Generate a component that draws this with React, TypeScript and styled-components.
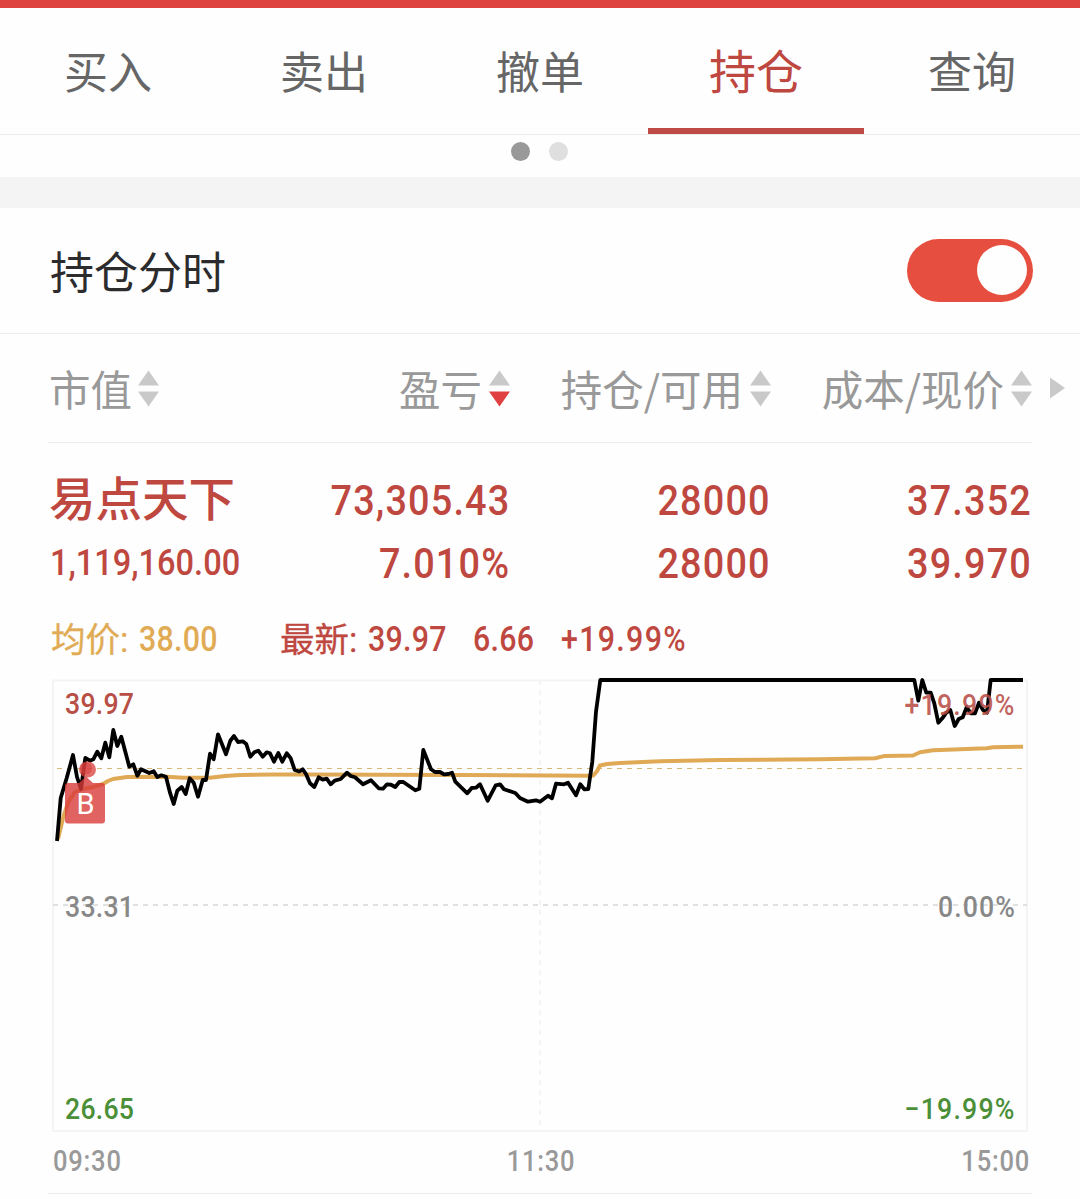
import React, { useState } from "react";
import styled, { createGlobalStyle } from "styled-components";

const red = "#be4840";
const line = "#ececec";

const GlobalStyle = createGlobalStyle`
  *, *::before, *::after { box-sizing: border-box; }
  html, body { margin: 0; background: #fefefe; }
  body { font-family: Roboto, "Noto Sans CJK SC", sans-serif; }
`;

const Page = styled.main`
  width: 1080px;
  height: 1199px;
  overflow: hidden;
  display: flex;
  flex-direction: column;
  background: #fefefe;
`;

const StatusStrip = styled.div`
  flex: none;
  height: 8px;
  background: #de4340;
`;

const Tabs = styled.nav`
  flex: none;
  height: 127px;
  display: grid;
  grid-template-columns: repeat(5, 1fr);
  border-bottom: 1px solid ${line};
`;

const Tab = styled.button<{ $active: boolean }>`
  border: 0;
  border-bottom: 6px solid ${(p) => (p.$active ? "#be4b45" : "transparent")};
  background: none;
  padding: 0;
  height: 126px;
  font-family: "Noto Sans CJK SC", sans-serif;
  font-size: ${(p) => (p.$active ? 47 : 44)}px;
  line-height: ${(p) => (p.$active ? 121 : 124)}px;
  font-weight: 400;
  color: ${(p) => (p.$active ? red : "#666")};
`;

const TabLabel = styled.span`
  display: block;
  height: 120px;
`;

const Pager = styled.div`
  flex: none;
  height: 42px;
  padding: 7px 2px 0 0;
  display: flex;
  justify-content: center;
  gap: 19px;
`;

const PagerDot = styled.span<{ $on: boolean }>`
  width: 19px;
  height: 19px;
  border-radius: 50%;
  background: ${(p) => (p.$on ? "#999" : "#dfdfdf")};
`;

const Band = styled.div`
  flex: none;
  height: 31px;
  background: #f4f4f4;
`;

const SwitchRow = styled.section`
  flex: none;
  height: 126px;
  padding: 0 47px 0 50px;
  display: flex;
  align-items: center;
  justify-content: space-between;
  border-bottom: 1px solid ${line};
`;

const SwitchLabel = styled.h2`
  margin: 0;
  padding-bottom: 2px;
  font: 400 44px/60px "Noto Sans CJK SC", sans-serif;
  color: #2c2c2e;
`;

const Switch = styled.button<{ $on: boolean }>`
  width: 126px;
  height: 63px;
  padding: 0 6px 1px;
  border: 0;
  border-radius: 32px;
  display: flex;
  align-items: center;
  justify-content: ${(p) => (p.$on ? "flex-end" : "flex-start")};
  background: ${(p) => (p.$on ? "#e64e3f" : "#ccc")};
`;

const Knob = styled.span`
  width: 50px;
  height: 50px;
  border-radius: 50%;
  background: #fefefe;
`;

const HeadRow = styled.div`
  flex: none;
  height: 109px;
  display: flex;
  align-items: center;
  padding-left: 48px;
`;

const columns = "201px 261px 261px 261px";

const HeadGrid = styled.div`
  width: 984px;
  height: 109px;
  display: grid;
  grid-template-columns: ${columns};
  align-items: center;
  border-bottom: 1px solid ${line};
`;

const HeadCell = styled.div<{ $left?: boolean }>`
  display: flex;
  align-items: center;
  justify-content: ${(p) => (p.$left ? "flex-start" : "flex-end")};
  gap: ${(p) => (p.$left ? 6 : 7)}px;
  padding-left: ${(p) => (p.$left ? 1 : 0)}px;
  font: 400 41.5px/60px "Noto Sans CJK SC", sans-serif;
  white-space: nowrap;
  color: #999;
`;

const MoreArrow = styled.svg`
  display: block;
  margin: 0 0 2px 18px;
`;

const SortIcon = styled.svg`
  display: block;
  flex: none;
`;

const Holding = styled.div`
  flex: none;
  height: 161px;
  padding: 26px 48px 0;
  display: grid;
  grid-template-columns: ${columns};
  grid-template-rows: 63px 63px;
  color: ${red};
`;

const StockName = styled.div`
  padding-left: 1px;
  font: 500 46.5px/53px "Noto Sans CJK SC", sans-serif;
`;

/* Condensed numerals: Roboto squeezed horizontally, with looser tracking. */
const Num = styled.span<{ $size: number; $track: number; $from?: "left" | "right" | "center" }>`
  display: inline-block;
  font-family: Roboto, sans-serif;
  font-weight: 500;
  font-size: ${(p) => p.$size}px;
  letter-spacing: ${(p) => p.$track}px;
  transform: scaleX(0.88);
  transform-origin: ${(p) => p.$from ?? "left"} center;
  white-space: nowrap;
`;

const Amount = styled.div`
  padding-left: 2px;
  line-height: 62px;
`;

const Figure = styled.div`
  text-align: right;
  line-height: 63px;
`;

const Quote = styled.div`
  flex: none;
  height: 72px;
  padding: 5px 0 0 51px;
  display: flex;
  line-height: 61px;
`;

const QuoteItem = styled.span<{ $width: number; $tone?: string }>`
  width: ${(p) => p.$width}px;
  display: flex;
  color: ${(p) => p.$tone ?? red};
`;

const QuoteLabel = styled.span`
  width: 87.5px;
  font-size: 34.5px;
  font-weight: 400;
  line-height: 62px;
  -webkit-text-stroke: 0.3px currentColor;
`;

const Chart = styled.svg`
  flex: none;
  display: block;
`;

const LabelText = styled.text<{ $tone: string }>`
  font: 500 29px Roboto, sans-serif;
  fill: ${(p) => p.$tone};
`;

const MarkerText = styled.text`
  font: 400 29px Roboto, sans-serif;
  fill: #fff;
`;

const TimeAxis = styled.div`
  flex: none;
  width: 984px;
  height: 54px;
  margin-left: 48px;
  padding: 0 2px 0 5px;
  display: grid;
  grid-template-columns: repeat(3, 1fr);
  line-height: 42px;
  color: #999;
  border-bottom: 1px solid ${line};
`;

const Tick = styled.div<{ $align: "left" | "center" | "right" }>`
  text-align: ${(p) => p.$align};
`;

const price =
  "57,841 60.7,798 66.7,778 73,755 77,777 81,789 85.3,758 90,760.7 93.3,759.3 97.3,751.7 101.3,758.3 105.3,742.7 109.3,757.3 113.3,730 117.3,746 121.3,736.7 129.3,766.7 133.3,764.3 137.3,775.7 141,769.3 149.3,773 153.7,771.3 157.3,777 161.3,775.3 166,776.7 170,792.7 173.7,804 177.3,790.7 181.7,787 185.7,794 189.7,778.3 193.7,782.7 198,796.7 202.7,780 206,780 210,753.7 213.7,759.3 218,734.3 226,754.3 230.3,740.7 234,736 238,742 242.7,741.3 246.3,744 250.3,756.7 254.3,752.3 258.3,750.7 262.7,756.7 266.7,752.3 270,753.3 274,761.7 278.3,753 282.3,761.7 286.7,753.3 290.7,758.3 294.7,770 299.3,771.5 302.7,769.3 306,774 310,783.3 314.3,787 318.7,777.3 322.7,779.7 326.7,778.7 330.7,784.3 334.7,780.7 340.7,779 347,772.7 350.7,776 355,777.3 363,784.3 371,780.3 378.7,788.3 383,788.7 387,784.3 391,784.7 395.3,787 399.3,782 403.3,782 415.3,790.3 419.3,788.7 423.3,750 431,769.3 435,772 440,772 444,774.3 448.3,774 452,772.7 455.3,781.7 467.3,793.3 471.7,788 476,787.7 480,784.3 487.7,800.7 495.7,785.3 500,784.3 504,789.3 515.3,793 520,798 528,801.7 536,800.3 540,801.7 548,795.7 552,798.3 556,783.7 564,784.3 568,782.7 576,795.3 580.3,784.3 584.3,789.3 588.3,789 592.3,761.7 596,711.7 600.3,680 914.3,680 918.3,700.7 922.3,680 926.3,692.7 930.7,692.7 934.3,703.3 938.3,722.7 942.3,718.3 946.3,712.7 950.3,710 954.7,726 958.7,719 962.7,717.3 966.7,707.3 970.7,713.3 975,713.3 979,702.7 983,710 987,712.7 990.7,680 1023,680";

const average =
  "58,839 63.3,817 68.3,802 75,792 83,789 93,787 103,784 108,781 113,779 127,777 167,776.7 183,777.7 210,777.7 225,776 240,775 273,774.5 300,774.5 460,775 590,775.7 593.3,775.4 596.7,771.7 600,765.5 607,764 620,763 660,761.3 720,760 820,759.3 875,758.3 885,755.9 913,755.5 920,752.3 933,750.3 987,748.3 993,747.3 1023,746.7";

function SortArrows({ down = false }: { down?: boolean }) {
  return (
    <SortIcon width="21" height="37" viewBox="0 0 21 37">
      <path d="M10.5 0.5 21 15.5H0z" fill="#c9c9c9" />
      <path d="M0 21.5h21L10.5 36.5z" fill={down ? "#e04040" : "#c9c9c9"} />
    </SortIcon>
  );
}

function ChartLabel(props: { x: number; y: number; width: number; tone: string; opacity?: number; children: string }) {
  return (
    <LabelText
      $tone={props.tone}
      fillOpacity={props.opacity ?? 1}
      transform={`translate(${props.x} ${props.y}) scale(0.92 1)`}
      textLength={props.width / 0.92}
    >
      {props.children}
    </LabelText>
  );
}

function BigFigure({ children }: { children: string }) {
  return (
    <Figure>
      <Num $size={43} $track={1.3} $from="right">{children}</Num>
    </Figure>
  );
}

const tabs = ["买入", "卖出", "撤单", "持仓", "查询"];

export default function App() {
  const [active, setActive] = useState("持仓");
  const [on, setOn] = useState(true);
  return (
    <>
      <GlobalStyle />
      <Page>
        <StatusStrip />
        <Tabs>
          {tabs.map((t) => (
            <Tab key={t} $active={t === active} onClick={() => setActive(t)}>
              <TabLabel>{t}</TabLabel>
            </Tab>
          ))}
        </Tabs>
        <Pager>
          <PagerDot $on />
          <PagerDot $on={false} />
        </Pager>
        <Band />
        <SwitchRow>
          <SwitchLabel>持仓分时</SwitchLabel>
          <Switch $on={on} onClick={() => setOn(!on)} aria-label="持仓分时">
            <Knob />
          </Switch>
        </SwitchRow>
        <HeadRow>
          <HeadGrid>
            <HeadCell $left>市值<SortArrows /></HeadCell>
            <HeadCell>盈亏<SortArrows down /></HeadCell>
            <HeadCell>持仓/可用<SortArrows /></HeadCell>
            <HeadCell>成本/现价<SortArrows /></HeadCell>
          </HeadGrid>
          <MoreArrow width="15" height="22" viewBox="0 0 15 22">
            <path d="M0 0.5 15 11 0 21.5z" fill="#c9c9c9" />
          </MoreArrow>
        </HeadRow>
        <Holding>
          <StockName>易点天下</StockName>
          <BigFigure>73,305.43</BigFigure>
          <BigFigure>28000</BigFigure>
          <BigFigure>37.352</BigFigure>
          <Amount>
            <Num $size={37} $track={0}>1,119,160.00</Num>
          </Amount>
          <BigFigure>7.010%</BigFigure>
          <BigFigure>28000</BigFigure>
          <BigFigure>39.970</BigFigure>
        </Holding>
        <Quote>
          <QuoteItem $width={229} $tone="#e0ab54">
            <QuoteLabel>均价:</QuoteLabel>
            <Num $size={34.5} $track={0.3}>38.00</Num>
          </QuoteItem>
          <QuoteItem $width={193}>
            <QuoteLabel>最新:</QuoteLabel>
            <Num $size={34.5} $track={0.3}>39.97</Num>
          </QuoteItem>
          <QuoteItem $width={88}>
            <Num $size={34.5} $track={0.3}>6.66</Num>
          </QuoteItem>
          <QuoteItem $width={150}>
            <Num $size={34.5} $track={1.5}>+19.99%</Num>
          </QuoteItem>
        </Quote>
        <Chart width="1080" height="464" viewBox="0 676 1080 464">
          <rect x="53" y="680.5" width="974" height="450.5" fill="none" stroke="#f4f4f4" strokeWidth="2" />
          <path d="M540 680V1131" stroke="#f4f4f4" strokeWidth="2" strokeDasharray="5 5" />
          <path d="M53 905H1027" stroke="#e0e0e0" strokeWidth="2" strokeDasharray="5 5" />
          <path d="M57 768.5H1023" stroke="#d6b878" strokeWidth="1.2" strokeDasharray="5 5" />
          <polyline points={average} fill="none" stroke="#dfa956" strokeWidth="4" strokeLinejoin="round" />
          <polyline points={price} fill="none" stroke="#000" strokeWidth="3.8" strokeLinejoin="round" />
          <g fill="#d83c3a">
            <ellipse cx="87.5" cy="769.5" rx="8.5" ry="8" fillOpacity="0.75" />
            <circle cx="86" cy="768.5" r="6" fillOpacity="0.5" />
            <path
              d="M68 783H79L86 776.5 93 783H102a3 3 0 0 1 3 3V820.500a3 3 0 0 1-3 3H68a3 3 0 0 1-3-3V786a3 3 0 0 1 3-3z"
              fillOpacity="0.8"
            />
          </g>
          <MarkerText x="76.500" y="814">B</MarkerText>
          <ChartLabel tone="#b84f47" x={65} y={714} width={69}>39.97</ChartLabel>
          <ChartLabel tone="#b84f47" opacity={0.88} x={904.5} y={714.5} width={110}>+19.99%</ChartLabel>
          <ChartLabel tone="#888" x={65} y={917} width={69}>33.31</ChartLabel>
          <ChartLabel tone="#888" x={938} y={917} width={77}>0.00%</ChartLabel>
          <ChartLabel tone="#4b8f38" x={65} y={1119} width={69}>26.65</ChartLabel>
          <ChartLabel tone="#4b8f38" x={904.5} y={1119} width={110}>−19.99%</ChartLabel>
        </Chart>
        <TimeAxis>
          <Tick $align="left"><Num $size={29} $track={0.9}>09:30</Num></Tick>
          <Tick $align="center"><Num $size={29} $track={0.9} $from="center">11:30</Num></Tick>
          <Tick $align="right"><Num $size={29} $track={0.9} $from="right">15:00</Num></Tick>
        </TimeAxis>
      </Page>
    </>
  );
}
